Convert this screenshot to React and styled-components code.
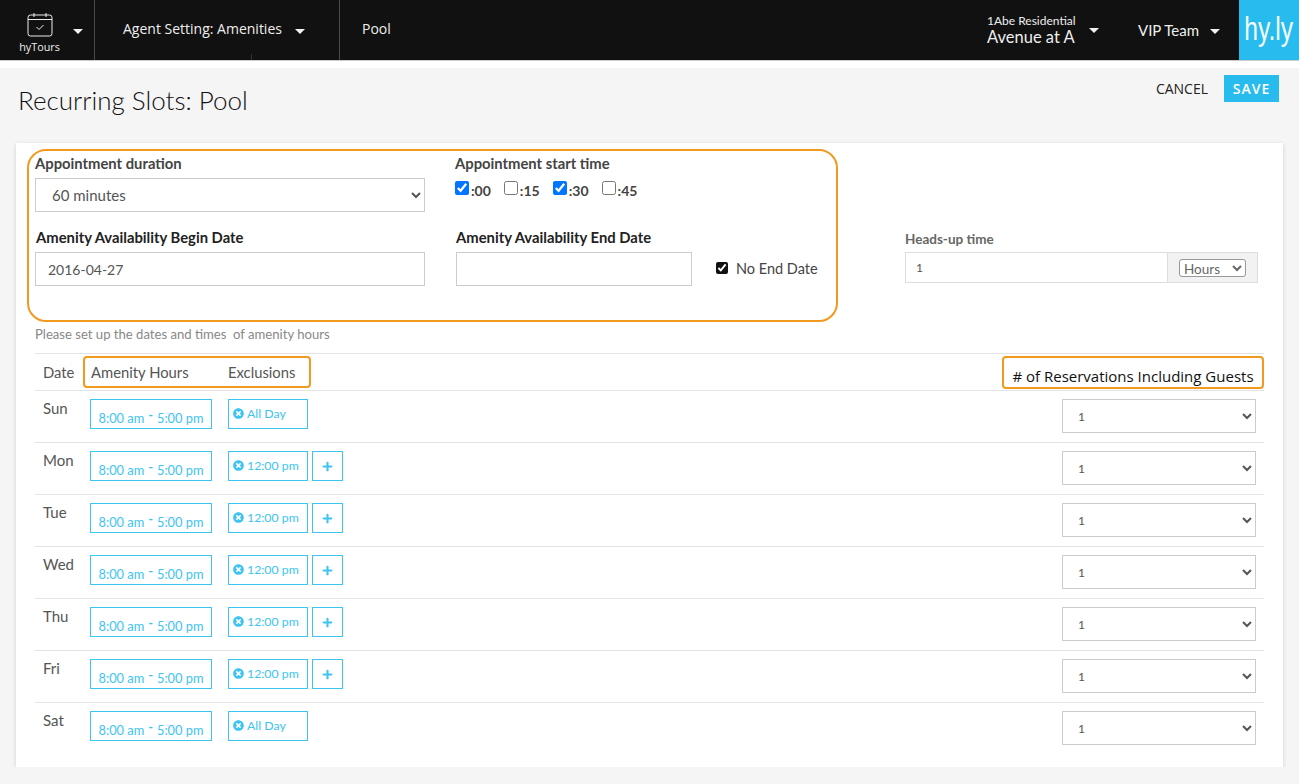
import styled, { createGlobalStyle } from 'styled-components';
import { FaTimesCircle, FaPlus } from 'react-icons/fa';

const days = [
  { name: 'Sun', exclusion: 'All Day' },
  { name: 'Mon', exclusion: '12:00 pm', more: true },
  { name: 'Tue', exclusion: '12:00 pm', more: true },
  { name: 'Wed', exclusion: '12:00 pm', more: true },
  { name: 'Thu', exclusion: '12:00 pm', more: true },
  { name: 'Fri', exclusion: '12:00 pm', more: true },
  { name: 'Sat', exclusion: 'All Day' },
];

const minutes = [
  { label: ':00', checked: true },
  { label: ':15' },
  { label: ':30', checked: true },
  { label: ':45' },
];

const CalendarIcon = () => (
  <svg width="26" height="25" viewBox="0 0 26 25" fill="none" stroke="#eee" strokeWidth="1">
    <rect x="1" y="3" width="24" height="21" rx="2.5" />
    <path d="M1 7.5h24M7 1v4M19 1v4" />
    <path d="M9.5 15l2.5 2.5 4.5-4.5" />
  </svg>
);

const App = () => {
  return (
    <>
      <GlobalStyle />
      <Nav>
        <LogoCell>
          <AppMark>
            <CalendarIcon />
            <AppName>hyTours</AppName>
          </AppMark>
          <Caret />
        </LogoCell>
        <AgentCell>
          Agent Setting: Amenities
          <Caret />
        </AgentCell>
        <PoolCell>Pool</PoolCell>
        <Account>
          <AccountName>
            <small>1Abe Residential</small>
            <span>Avenue at A</span>
          </AccountName>
          <Caret />
        </Account>
        <Team>
          VIP Team
          <Caret />
        </Team>
        <Brand>
          <span>hy.ly</span>
        </Brand>
      </Nav>
      <Strip />

      <SubHeader>
        <Title>Recurring Slots: Pool</Title>
        <Actions>
          <CancelButton>CANCEL</CancelButton>
          <SaveButton>SAVE</SaveButton>
        </Actions>
      </SubHeader>

      <Card>
        <TopSection>
          <Highlight>
            <Field>
              <Label>Appointment duration</Label>
              <Select defaultValue="60">
                <option value="60">60 minutes</option>
              </Select>
            </Field>
            <Field>
              <Label>Appointment start time</Label>
              <Minutes>
                {minutes.map((m) => (
                  <MinuteOption key={m.label}>
                    <input type="checkbox" defaultChecked={m.checked} />
                    <span>{m.label}</span>
                  </MinuteOption>
                ))}
              </Minutes>
            </Field>
            <Field>
              <Label $dark $indent>Amenity Availability Begin Date</Label>
              <TextInput defaultValue="2016-04-27" />
            </Field>
            <EndDateField>
              <Field>
                <Label $dark>Amenity Availability End Date</Label>
                <TextInput $width={236} />
              </Field>
              <NoEndDate>
                <input type="checkbox" defaultChecked />
                No End Date
              </NoEndDate>
            </EndDateField>
          </Highlight>
          <HeadsUp>
            <SmallLabel>Heads-up time</SmallLabel>
            <InputGroup>
              <GroupInput defaultValue="1" />
              <Addon>
                <UnitSelect defaultValue="hours">
                  <option value="hours">Hours</option>
                </UnitSelect>
              </Addon>
            </InputGroup>
          </HeadsUp>
        </TopSection>

        <Hint>Please set up the dates and times&nbsp; of amenity hours</Hint>

        <Table>
          <HeaderRow>
            <HeaderDate>Date</HeaderDate>
            <ColumnsNote>
              <HoursHeading>Amenity Hours</HoursHeading>
              <span>Exclusions</span>
            </ColumnsNote>
            <ReservationsNote>
              # of Reservations Including Guests
            </ReservationsNote>
          </HeaderRow>
          {days.map((day) => (
            <DayRow key={day.name}>
              <DayName>{day.name}</DayName>
              <HoursPill>
                8:00 am <Dash>-</Dash> 5:00 pm
              </HoursPill>
              <ExclusionPill>
                <FaTimesCircle size={11} />
                {day.exclusion}
              </ExclusionPill>
              {day.more && (
                <PlusButton>
                  <FaPlus size={11} />
                </PlusButton>
              )}
              <RowSelect defaultValue="1">
                <option value="1">1</option>
              </RowSelect>
            </DayRow>
          ))}
        </Table>
      </Card>
    </>
  );
};

const GlobalStyle = createGlobalStyle`
  body {
    margin: 0;
    background: #f5f5f5;
    font-family: Lato, 'Open Sans', sans-serif;
    color: #555;
  }
`;

const Nav = styled.nav`
  display: flex;
  height: 60px;
  background: #111;
  color: #eee;
  font-family: 'Open Sans', sans-serif;
  font-size: 14px;
`;

const Caret = styled.i`
  display: block;
  width: 0;
  height: 0;
  border-left: 5px solid transparent;
  border-right: 5px solid transparent;
  border-top: 5px solid #f2f2f2;
`;

const LogoCell = styled.div`
  display: flex;
  align-items: center;
  width: 95px;
  box-sizing: border-box;
  padding-left: 20px;
  border-right: 1px solid #4a4a4a;

  ${Caret} {
    margin: 3px 0 0 14px;
  }
`;

const AppMark = styled.div`
  display: flex;
  flex-direction: column;
  align-items: center;
  gap: 3px;
  width: 39px;
  margin-top: 5px;

  svg {
    margin-left: 1px;
  }
`;

const AppName = styled.span`
  font-size: 10.8px;
  line-height: 14px;
`;

const AgentCell = styled.div`
  position: relative;
  display: flex;
  align-items: center;
  width: 245px;
  box-sizing: border-box;
  padding: 0 0 3px 28px;
  border-right: 1px solid #4a4a4a;

  ${Caret} {
    margin: 5px 0 0 13px;
  }

  &::after {
    content: '';
    position: absolute;
    left: 156px;
    bottom: 0;
    height: 6px;
    border-left: 1px solid #333;
  }
`;

const PoolCell = styled.div`
  display: flex;
  align-items: center;
  padding: 0 0 3px 22px;
`;

const Account = styled.div`
  display: flex;
  align-items: center;
  width: 151px;
  margin-left: auto;
  font-family: Lato, sans-serif;

  ${Caret} {
    margin: 0 0 0 13px;
  }
`;

const AccountName = styled.div`
  display: flex;
  flex-direction: column;

  small {
    font-size: 12px;
    line-height: 14px;
  }

  span {
    font-size: 16.5px;
    line-height: 18px;
  }
`;

const Team = styled.div`
  display: flex;
  align-items: center;
  width: 101px;
  font-family: Lato, sans-serif;
  font-size: 15px;

  ${Caret} {
    margin: 2px 0 0 11px;
  }
`;

const Brand = styled.div`
  display: flex;
  align-items: center;
  justify-content: center;
  width: 60px;
  padding-bottom: 3px;
  box-sizing: border-box;
  background: #27bbee;
  color: #f4fbfe;
  font-family: 'Liberation Sans', sans-serif;
  font-size: 33px;

  span {
    transform: scaleX(0.75);
  }
`;

const Strip = styled.div`
  height: 7px;
  background: #fff;
  border-top: 1px solid #ccc;
`;

const SubHeader = styled.header`
  display: flex;
  justify-content: space-between;
  height: 75px;
  padding: 7px 20px 0 18px;
  box-sizing: border-box;
`;

const Title = styled.h1`
  margin: 11px 0 0;
  font-size: 26px;
  line-height: 28px;
  font-weight: 300;
  color: #111;
`;

const Actions = styled.div`
  display: flex;
  align-items: flex-start;
  gap: 16px;
`;

const CancelButton = styled.button`
  height: 27px;
  padding: 0;
  border: 0;
  background: none;
  color: #222;
  font-family: 'Open Sans', sans-serif;
  font-size: 14px;
`;

const SaveButton = styled.button`
  width: 55px;
  height: 27px;
  padding: 0;
  border: 0;
  background: #27bbee;
  color: #fff;
  font-family: 'Open Sans', sans-serif;
  font-size: 14px;
  font-weight: 600;
  letter-spacing: 1px;
`;

const Card = styled.main`
  margin: 0 16px;
  padding: 6px 19px 13px 11px;
  background: #fff;
  box-shadow: 0 1px 4px rgba(0, 0, 0, 0.15);
`;

const TopSection = styled.section`
  display: flex;
  align-items: flex-start;
`;

const Highlight = styled.div`
  display: grid;
  grid-template-columns: 390px 1fr;
  column-gap: 30px;
  row-gap: 16px;
  align-content: start;
  width: 811px;
  height: 173px;
  box-sizing: border-box;
  padding: 3px 0 0 6px;
  border: 2px solid #f29a1f;
  border-radius: 19px;
`;

const Field = styled.div`
  display: flex;
  flex-direction: column;
`;

const Label = styled.label`
  height: 20px;
  margin: 0 0 4px ${(props) => (props.$indent ? '1px' : '0')};
  font-size: 14.8px;
  line-height: 18px;
  font-weight: 700;
  color: ${(props) => (props.$dark ? '#222' : '#444')};
`;

const Select = styled.select`
  height: 34px;
  padding-left: 12px;
  border: 1px solid #ccc;
  border-radius: 0;
  background: #fff;
  color: #555;
  font-family: Lato, sans-serif;
  font-size: 15px;
`;

const TextInput = styled.input`
  width: ${(props) => props.$width || 390}px;
  height: 34px;
  box-sizing: border-box;
  padding: 0 12px;
  border: 1px solid #ccc;
  color: #555;
  font-family: Lato, sans-serif;
  font-size: 14px;
`;

const Minutes = styled.div`
  display: flex;
  gap: 13px;
`;

const MinuteOption = styled.label`
  display: flex;
  align-items: flex-start;
  gap: 2px;
  height: 22px;
  font-size: 14px;
  font-weight: 700;
  color: #444;

  input {
    width: 14px;
    height: 14px;
    margin: 3px 0 0;
  }

  span {
    margin-top: 4px;
  }
`;

const EndDateField = styled.div`
  display: flex;
  align-items: flex-end;
  margin-left: 1px;
`;

const NoEndDate = styled.label`
  display: flex;
  align-items: center;
  gap: 8px;
  height: 34px;
  margin: 0 0 1px 24px;
  font-size: 14.5px;
  color: #444;

  input {
    width: 12px;
    height: 12px;
    margin: 0;
    accent-color: #111;
  }
`;

const HeadsUp = styled.div`
  display: flex;
  flex-direction: column;
  width: 353px;
  margin: 80px 0 0 67px;
`;

const SmallLabel = styled.label`
  height: 20px;
  margin-bottom: 3px;
  font-size: 13.5px;
  line-height: 20px;
  font-weight: 700;
  color: #666;
`;

const InputGroup = styled.div`
  display: flex;
  height: 31px;
  border: 1px solid #ddd;
  box-sizing: border-box;
`;

const GroupInput = styled.input`
  flex: 1;
  min-width: 0;
  padding: 0 10px;
  border: 0;
  color: #555;
  font-family: Lato, sans-serif;
  font-size: 12px;
`;

const Addon = styled.div`
  display: flex;
  align-items: center;
  justify-content: center;
  width: 89px;
  border-left: 1px solid #ddd;
  background: #f2f2f2;
`;

const UnitSelect = styled.select`
  width: 67px;
  height: 18px;
  padding: 0;
  border: 1px solid #999;
  border-radius: 3px;
  background: #fff;
  color: #666;
  font-family: Lato, sans-serif;
  font-size: 13.5px;
`;

const Hint = styled.p`
  margin: 3px 0 10px 8px;
  font-size: 13.1px;
  line-height: 18px;
  color: #888;
`;

const Table = styled.div`
  margin-left: 8px;
`;

const HeaderRow = styled.div`
  display: flex;
  align-items: center;
  height: 37px;
  box-sizing: border-box;
  border-top: 1px solid #e3e3e3;
  font-size: 14.8px;
`;

const HeaderDate = styled.div`
  width: 48px;
  padding-left: 8px;
  box-sizing: border-box;
`;

const ColumnsNote = styled.div`
  display: flex;
  align-items: center;
  width: 228px;
  height: 32px;
  box-sizing: border-box;
  padding-left: 6px;
  border: 2px solid #f29a1f;
  border-radius: 4px;
`;

const HoursHeading = styled.span`
  width: 137px;
`;

const ReservationsNote = styled.div`
  display: flex;
  align-items: flex-end;
  justify-content: center;
  width: 262px;
  height: 33px;
  box-sizing: border-box;
  margin-left: auto;
  padding-bottom: 1px;
  border: 2px solid #f29a1f;
  border-radius: 4px;
  color: #111;
  font-family: 'Open Sans', sans-serif;
  font-size: 15px;
`;

const DayRow = styled.div`
  display: flex;
  align-items: flex-start;
  height: 52px;
  box-sizing: border-box;
  padding-top: 8px;
  border-top: 1px solid #e3e3e3;
`;

const DayName = styled.div`
  width: 55px;
  padding-left: 8px;
  box-sizing: border-box;
  font-size: 15px;
  line-height: 18px;
`;

const Pill = styled.div`
  display: flex;
  align-items: center;
  height: 30px;
  box-sizing: border-box;
  border: 1px solid #3cc4f2;
  color: #3cc4f2;
  font-size: 12.5px;
`;

const HoursPill = styled(Pill)`
  justify-content: center;
  gap: 4px;
  width: 122px;
  margin-right: 16px;
  padding-top: 7px;
  font-size: 12.8px;
`;

const Dash = styled.span`
  margin-top: -5px;
  font-weight: 700;
`;

const ExclusionPill = styled(Pill)`
  gap: 3px;
  width: 80px;
  padding: 0 0 2px 4px;
  font-size: 12.3px;

  svg {
    flex: none;
  }
`;

const PlusButton = styled(Pill)`
  justify-content: center;
  width: 31px;
  margin-left: 4px;
`;

const RowSelect = styled(Select)`
  width: 194px;
  margin: 0 8px 0 auto;
  padding-left: 11px;
  font-size: 12px;
`;

export default App;
